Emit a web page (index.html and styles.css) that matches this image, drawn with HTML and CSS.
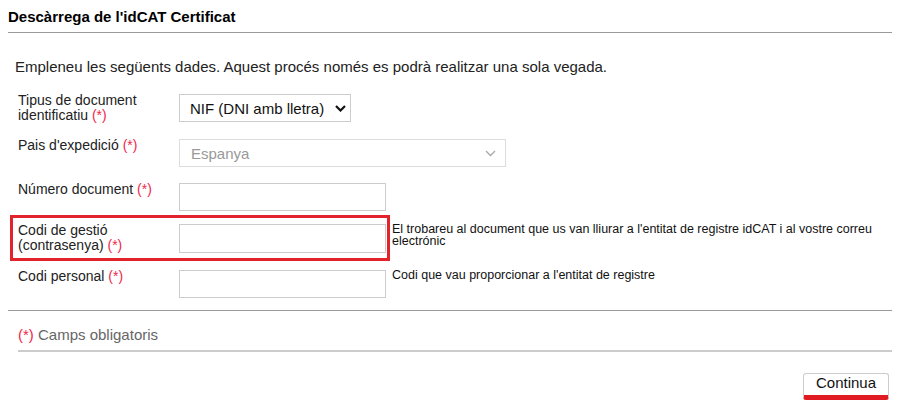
FILE: index.html
```html
<!DOCTYPE html>
<html lang="ca">
<head>
<meta charset="utf-8">
<title>Descàrrega de l'idCAT Certificat</title>
<link rel="stylesheet" href="styles.css">
</head>
<body>
<div class="page">
  <h1 class="title">Descàrrega de l'idCAT Certificat</h1>
  <p class="intro">Empleneu les següents dades. Aquest procés només es podrà realitzar una sola vegada.</p>

  <div class="form">
    <div class="row">
      <div class="field">
        <label class="label">Tipus de document identificatiu <span class="req">(*)</span></label>
        <div class="select">
          <span class="select-text">NIF (DNI amb lletra)</span>
          <svg class="chev" width="11" height="7" viewBox="0 0 11 7"><path d="M1 1 L5.5 5.5 L10 1" fill="none" stroke="#111" stroke-width="2.2"/></svg>
        </div>
      </div>
    </div>

    <div class="row">
      <div class="field">
        <label class="label">Pais d'expedició <span class="req">(*)</span></label>
        <div class="select select-disabled">
          <span class="select-text">Espanya</span>
          <svg class="chev" width="11" height="7" viewBox="0 0 11 7"><path d="M1 1 L5.5 5.5 L10 1" fill="none" stroke="#aaa" stroke-width="1.4"/></svg>
        </div>
      </div>
    </div>

    <div class="row">
      <div class="field">
        <label class="label">Número document <span class="req">(*)</span></label>
        <input class="input" type="text">
      </div>
    </div>

    <div class="row row-highlight">
      <div class="field field-highlight">
        <label class="label">Codi de gestió (contrasenya) <span class="req">(*)</span></label>
        <input class="input input-tall" type="password">
      </div>
      <div class="help">El trobareu al document que us van lliurar a l'entitat de registre idCAT i al vostre correu electrónic</div>
    </div>

    <div class="row">
      <div class="field">
        <label class="label">Codi personal <span class="req">(*)</span></label>
        <input class="input" type="password">
      </div>
      <div class="help">Codi que vau proporcionar a l'entitat de registre</div>
    </div>
  </div>

  <div class="note"><span class="req">(*)</span> Camps obligatoris</div>

  <div class="actions">
    <button class="btn" type="button">Continua</button>
  </div>
</div>
</body>
</html>
```

FILE: styles.css
```css
* { box-sizing: border-box; }

html, body {
  margin: 0;
  padding: 0;
  background: #fff;
}

body {
  font-family: "Liberation Sans", Arial, sans-serif;
  color: #222;
}

.page {
  width: 884px;
  margin-left: 8px;
}

.title {
  margin: 0;
  padding-top: 9px;
  height: 33px;
  font-size: 15px;
  line-height: 16px;
  font-weight: bold;
  color: #000;
  border-bottom: 1px solid #999;
}

.intro {
  margin: 0;
  padding: 25px 0 0 7px;
  height: 52px;
  font-size: 15px;
  line-height: 17px;
  color: #222;
}

.form {
  display: flex;
  flex-direction: column;
}

.row {
  display: flex;
  align-items: flex-start;
}

.row-highlight {
  margin-top: -3px;
}

.field {
  display: flex;
  align-items: flex-start;
  width: 380px;
  margin-left: 2px;
  padding: 6px 1px 4px 5px;
  border: 3px solid transparent;
  flex: none;
}

.field-highlight {
  border-color: #e3232b;
  padding-bottom: 5px;
}

.label {
  width: 161px;
  flex: none;
  font-size: 14px;
  line-height: 15px;
  margin-top: -1px;
  color: #222;
  padding-right: 20px;
}

.req {
  color: #f0284a;
}

.input {
  display: block;
  width: 207px;
  height: 28px;
  margin: 0;
  border: 1px solid #ccc;
  background: #fff;
  padding: 0 6px;
  font: 14px "Liberation Sans", Arial, sans-serif;
  outline: none;
}

.input-tall {
  height: 29px;
}

.select {
  display: flex;
  align-items: center;
  height: 28px;
  padding: 0 4px 0 10px;
  border: 1px solid #ccc;
  background: #fff;
  font-size: 15px;
  color: #111;
  flex: none;
}

.select-text {
  margin-right: 11px;
}

.select-disabled {
  width: 327px;
  justify-content: space-between;
  padding-left: 11px;
  padding-right: 9px;
  border-color: #ddd;
  color: #999;
}

.chev {
  display: block;
  margin-top: 1px;
}

.help {
  flex: 1;
  margin-left: 2px;
  padding-top: 8px;
  font-size: 12.5px;
  line-height: 12px;
  color: #111;
}

.note {
  margin-top: 5px;
  border-top: 1px solid #999;
  padding: 17px 0 0 10px;
  height: 42px;
  font-size: 15px;
  line-height: 14px;
  color: #666;
}

.note::after {
  content: "";
  display: block;
  margin-top: 8px;
  height: 2px;
  background: #ccc;
}

.actions {
  display: flex;
  justify-content: flex-end;
  padding-right: 3px;
  margin-top: 21px;
}

.btn {
  width: 86px;
  height: 27px;
  margin: 0;
  padding: 0 0 4px 0;
  background: #fff;
  border: 1px solid #ccc;
  border-bottom: 5px solid #e01c22;
  border-radius: 3px;
  font: 15px "Liberation Sans", Arial, sans-serif;
  color: #111;
  cursor: pointer;
}
```
